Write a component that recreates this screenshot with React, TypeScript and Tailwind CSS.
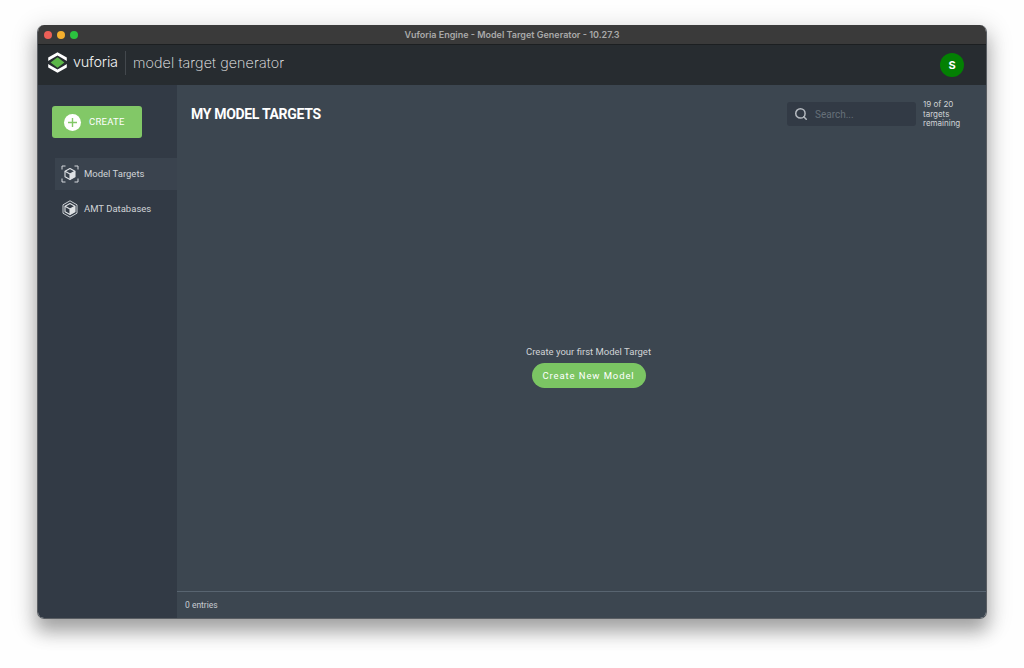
import { Search } from 'lucide-react';

function VuforiaMark() {
  return (
    <svg width="19" height="21" viewBox="0 0 19 21">
      <path d="M9.5 0.3 L18.8 5.4 V8.9 L15.6 6.9 L9.5 3.6 L3.4 6.9 L0.2 8.9 V5.4 Z" fill="#fff" />
      <path d="M9.5 20.7 L18.8 15.6 V12.1 L15.6 14.1 L9.5 17.4 L3.4 14.1 L0.2 12.1 V15.6 Z" fill="#fff" />
      <path d="M9.5 5.2 L16.4 10.5 L9.5 15.8 L2.6 10.5 Z" fill="#5cb648" />
    </svg>
  );
}

function CubeGlyph() {
  return (
    <g fill="none" stroke="#dfe2e5" strokeWidth="1.1" strokeLinejoin="round">
      <path d="M9 3.6 L14 6.2 V11.8 L9 14.6 L4 11.8 V6.2 Z" />
      <path d="M4 6.2 L9 8.9 L14 6.2 M9 8.9 V14.6" />
      <path d="M9 8.9 L14 6.2 V11.8 L9 14.6 Z" fill="#dfe2e5" stroke="none" />
    </g>
  );
}

function ModelTargetIcon() {
  return (
    <svg width="18" height="18" viewBox="0 0 18 18">
      <path
        d="M1 4.5 V1 H4.5 M13.5 1 H17 V4.5 M1 13.5 V17 H4.5 M13.5 17 H17 V13.5"
        fill="none"
        stroke="#d5d9dd"
        strokeWidth="1"
      />
      <CubeGlyph />
    </svg>
  );
}

function DatabaseIcon() {
  return (
    <svg width="18" height="18" viewBox="0 0 18 18">
      <path
        d="M9 0.8 L16 4.8 V13.2 L9 17.2 L2 13.2 V4.8 Z"
        fill="none"
        stroke="#c9ced3"
        strokeWidth="1"
        strokeLinejoin="round"
      />
      <CubeGlyph />
    </svg>
  );
}

export default function App() {
  return (
    <div className="h-[668px] w-[1024px] overflow-hidden bg-[#fefefe] pl-[37px] pt-[25px] font-['Roboto',sans-serif]">
      <div className="flex h-[594px] w-[950px] flex-col overflow-hidden rounded-[7px] border-x border-b border-[#5a5e63] shadow-[0_12px_18px_0_rgba(0,0,0,0.3),0_6px_22px_8px_rgba(0,0,0,0.09)]">
        {/* title bar */}
        <div className="relative flex h-[20px] shrink-0 items-center border-b border-[#1c1f21] bg-[#3a3a3a] pl-[6px]">
          <div className="flex gap-[5px]">
            <span className="h-[8px] w-[8px] rounded-full bg-[#ec5f57]" />
            <span className="h-[8px] w-[8px] rounded-full bg-[#f5b02e]" />
            <span className="h-[8px] w-[8px] rounded-full bg-[#2bc43f]" />
          </div>
          <div className="absolute inset-0 text-center font-['Inter',sans-serif] text-[9px] font-semibold leading-[19px] text-[#a9a9a9]">
            Vuforia Engine - Model Target Generator - 10.27.3
          </div>
        </div>

        {/* app header */}
        <div className="flex h-[40px] shrink-0 items-center bg-[#272c30] pb-[5px] pl-[10px] pr-[22px]">
          <VuforiaMark />
          <span className="ml-[6px] w-[47px] font-['Inter',sans-serif] text-[14.5px] font-light leading-none tracking-[-0.25px] text-[#f2f2f2]">
            vuforia
          </span>
          <div className="ml-[5px] h-[24px] w-px bg-[#43484d]" />
          <span className="ml-[7px] font-['Inter',sans-serif] text-[14.3px] font-extralight tracking-[0.12px] text-[#f0f0f0]">
            model target generator
          </span>
          <div className="ml-auto mt-[5px] flex h-[24px] w-[24px] items-center justify-center rounded-full bg-[#038003] font-['Inter',sans-serif] text-[11px] font-bold text-white">
            S
          </div>
        </div>

        <div className="flex min-h-0 flex-1">
          {/* sidebar */}
          <aside className="w-[139px] shrink-0 bg-[#323a45] pt-[21px]">
            <button className="ml-[14px] flex h-[32px] w-[90px] items-center rounded-[3px] bg-[#82c867] pl-[12px] text-[9.5px] text-white">
              <span className="flex h-[17px] w-[17px] items-center justify-center rounded-full bg-white">
                <svg width="11" height="11" viewBox="0 0 11 11">
                  <path d="M5.5 1 V10 M1 5.5 H10" stroke="#82c867" strokeWidth="1.4" />
                </svg>
              </span>
              <span className="ml-[8px] tracking-[0.25px]">CREATE</span>
            </button>
            <nav className="ml-[17px] mt-[20px]">
              <div className="flex h-[32px] items-center bg-[#3a434e] pl-[6px] text-[9.5px] text-[#d0d3d6]">
                <ModelTargetIcon />
                <span className="ml-[5px]">Model Targets</span>
              </div>
              <div className="mt-[3px] flex h-[32px] items-center pl-[6px] text-[9.5px] text-[#d0d3d6]">
                <DatabaseIcon />
                <span className="ml-[5px]">AMT Databases</span>
              </div>
            </nav>
          </aside>

          {/* main */}
          <main className="flex min-w-0 flex-1 flex-col bg-[#3c4650]">
            <div className="flex h-[59px] shrink-0 items-start pl-[14px] pr-[24px] pt-[17px]">
              <h1 className="pt-[3px] text-[14px] font-bold leading-[18px] tracking-[-0.32px] text-white">MY MODEL TARGETS</h1>
              <div className="ml-auto flex h-[24px] w-[129px] items-center rounded-[3px] bg-[#323a45] pl-[7px]">
                <Search size={14} strokeWidth={2.6} className="text-[#b4b9bf]" />
                <span className="ml-[7px] text-[10px] text-[#667079]">Search...</span>
              </div>
              <div className="ml-[7px] -mt-[2px] w-[39px] font-['Inter',sans-serif] text-[8px] leading-[9.5px] text-[#d0d3d6]">
                19 of 20 targets remaining
              </div>
            </div>

            <div className="flex flex-1 flex-col items-center pl-[14px] pt-[202px]">
              <p className="text-[9.5px] leading-[12px] text-[#d0d3d6]">Create your first Model Target</p>
              <button className="mt-[5px] h-[25px] w-[114px] rounded-full bg-[#7bc563] pt-px text-[9.5px] tracking-[0.9px] text-white">
                Create New Model
              </button>
            </div>

            <div className="flex h-[27px] shrink-0 items-center border-t border-[#586470] pl-[8px] text-[8.5px] text-[#c6cbd0]">
              0 entries
            </div>
          </main>
        </div>
      </div>
    </div>
  );
}
